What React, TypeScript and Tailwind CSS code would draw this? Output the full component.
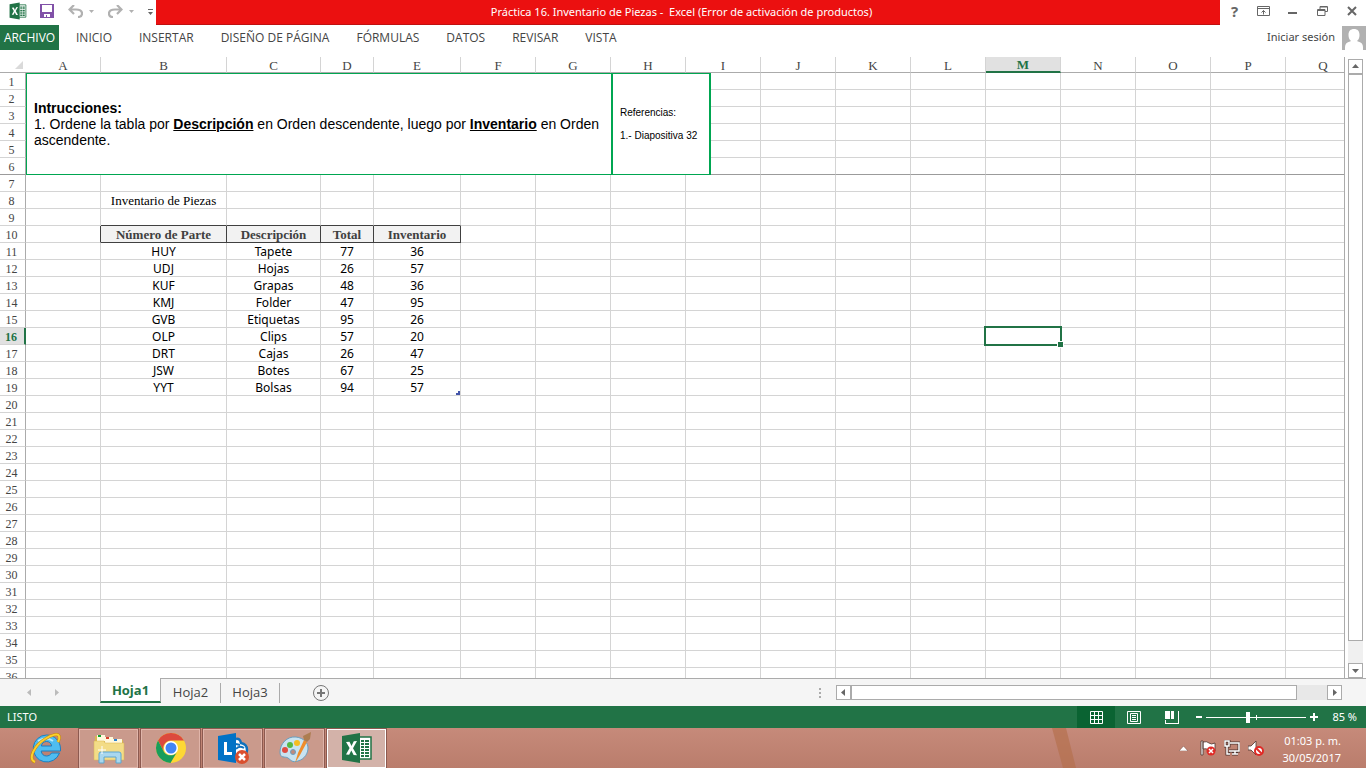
import { clsx } from "clsx";

const ribbonTabs = ["INICIO", "INSERTAR", "DISEÑO DE PÁGINA", "FÓRMULAS", "DATOS", "REVISAR", "VISTA"];

const columns = [
    { id: "A", width: "w-[75px]" },
    { id: "B", width: "w-[126px]" },
    { id: "C", width: "w-[94px]" },
    { id: "D", width: "w-[53px]" },
    { id: "E", width: "w-[87px]" },
    ..."FGHIJKLMNOPQ".split("").map((id) => ({ id, width: "w-[75px]" })),
];

const headings = ["Número de Parte", "Descripción", "Total", "Inventario"];

const parts = [
    ["HUY", "Tapete", "77", "36"],
    ["UDJ", "Hojas", "26", "57"],
    ["KUF", "Grapas", "48", "36"],
    ["KMJ", "Folder", "47", "95"],
    ["GVB", "Etiquetas", "95", "26"],
    ["OLP", "Clips", "57", "20"],
    ["DRT", "Cajas", "26", "47"],
    ["JSW", "Botes", "67", "25"],
    ["YYT", "Bolsas", "94", "57"],
];

const rows = Array.from({ length: 36 }, (_, i) => i + 1);

function cellValue(row: number, col: number) {
    if (row === 8 && col === 1) return "Inventario de Piezas";
    if (col < 1 || col > 4) return "";
    if (row === 10) return headings[col - 1];
    return parts[row - 11]?.[col - 1] ?? "";
}

function ExcelLogo({ className }: { className: string }) {
    return (
        <svg viewBox="0 0 32 32" className={className} aria-hidden="true">
            <path d="M16 5h14v22H16z" fill="#fff" stroke="#217346" strokeWidth="1.500" />
            <path d="M20 8h3v2h-3zM24 8h4v2h-4zM20 11h3v2h-3zM24 11h4v2h-4zM20 14h3v2h-3zM24 14h4v2h-4zM20 17h3v2h-3zM24 17h4v2h-4zM20 20h3v2h-3zM24 20h4v2h-4zM20 23h3v2h-3zM24 23h4v2h-4z" fill="#217346" />
            <path d="M1 4 19 1v30L1 28z" fill="#217346" />
            <path d="m5 10 3.500-.3 2 4.300 2.300-4.700 3.200-.3-4 7.200 4 7-3.400-.2-2.300-4.600-2.100 4.300-3.200-.2 3.600-6.400z" fill="#fff" />
        </svg>
    );
}

function TitleBar() {
    return (
        <header className="flex h-[25px] shrink-0">
            <div className="flex w-[156px] shrink-0 items-center pl-[9px] pb-[3px]">
                <ExcelLogo className="h-[18px] w-[18px]" />
                <button aria-label="Guardar" className="ml-[13px]">
                    <svg viewBox="0 0 14 14" className="h-[14px] w-[14px]">
                        <path d="M0 0h14v14H0z" fill="#8151a8" />
                        <path d="M2 1h10v7H2zM4 10h6v3H7v-2H6v2H4z" fill="#fff" />
                    </svg>
                </button>
                <button aria-label="Deshacer" className="ml-[14px] flex items-center gap-[6px] text-[#b1b1b1]">
                    <svg viewBox="0 0 15 13" className="h-[13px] w-[15px]" fill="none" stroke="currentColor" strokeWidth="2.200">
                        <path d="M6 0 1.500 4.500 6 9M2 4.500h6c4 0 6 1.500 6 4 0 2-1.500 3.500-4 3.500" />
                    </svg>
                    <svg viewBox="0 0 5 3" className="h-[3px] w-[5px]"><path d="M0 0h5L2.500 3z" fill="currentColor" /></svg>
                </button>
                <button aria-label="Rehacer" className="ml-[14px] flex items-center gap-[6px] text-[#b1b1b1]">
                    <svg viewBox="0 0 15 13" className="h-[13px] w-[15px]" fill="none" stroke="currentColor" strokeWidth="2.200">
                        <path d="m9 0 4.500 4.500L9 9M13 4.500H7c-4 0-6 1.500-6 4C1 10.500 2.500 12 5 12" />
                    </svg>
                    <svg viewBox="0 0 5 3" className="h-[3px] w-[5px]"><path d="M0 0h5L2.500 3z" fill="currentColor" /></svg>
                </button>
                <button aria-label="Personalizar barra" className="ml-[14px] pt-[2px]">
                    <svg viewBox="0 0 5 6" className="h-[6px] w-[5px]" fill="#666"><path d="M0 0h5v1H0zM0 3h5L2.500 6z" /></svg>
                </button>
            </div>
            <h1 className="flex flex-1 items-center justify-center border-b border-[#c01010] bg-[#eb1010] pr-[13px] text-[11px] whitespace-pre text-white">
                {"Práctica 16. Inventario de Piezas -  Excel (Error de activación de productos)"}
            </h1>
            <div className="flex w-[146px] shrink-0 items-center pb-[3px] pl-[11px] text-[#666]">
                <button aria-label="Ayuda" className="w-[7px] text-[15px] font-bold leading-4">?</button>
                <button aria-label="Opciones de presentación" className="ml-[19px]">
                    <svg viewBox="0 0 13 10" className="h-[10px] w-[13px]" fill="none" stroke="currentColor"><path d="M.5.5h12v9H.5zM1 2.500h11M6.500 8.500v-4M4.500 6.500l2-2 2 2" /></svg>
                </button>
                <button aria-label="Minimizar" className="ml-[18px] mt-[4px] h-[2px] w-[9px] bg-[#666]" />
                <button aria-label="Restaurar" className="ml-[20px]">
                    <svg viewBox="0 0 11 10" className="h-[10px] w-[11px]" fill="none" stroke="currentColor"><path d="M3 3V.5h7.500v5H8M3 1h7M.5 3.500H8v6H.5zM1 4.500h7" /></svg>
                </button>
                <button aria-label="Cerrar" className="ml-[19px]">
                    <svg viewBox="0 0 10 10" className="h-[10px] w-[10px]" stroke="currentColor" strokeWidth="2"><path d="m1 1 8 8M9 1 1 9" /></svg>
                </button>
            </div>
        </header>
    );
}

function Ribbon() {
    return (
        <nav className="mb-[7px] flex h-[25px] shrink-0 items-center whitespace-nowrap text-[12px] text-[#444]">
            <button className="h-full w-[59px] bg-[#217346] font-['Open_Sans',sans-serif] text-white">ARCHIVO</button>
            <div className="ml-[17px] flex gap-[27px] font-['Open_Sans',sans-serif]">
                {ribbonTabs.map((tab) => (
                    <button key={tab}>{tab}</button>
                ))}
            </div>
            <button className="ml-auto text-[11px]">Iniciar sesión</button>
            <svg viewBox="0 0 24 24" className="ml-[7px] h-6 w-6" aria-hidden="true">
                <path d="M0 0h24v24H0z" fill="#b1b1b1" />
                <path d="M3 24v-3c0-3 2-5 5-5.500l1-.5c-2-1.500-2.500-4-2.500-6C6.500 5 8.500 3 12 3s5.500 2 5.500 6c0 2-.5 4.500-2.500 6l1 .5c3 .5 5 2.500 5 5.500v3z" fill="#fff" />
            </svg>
        </nav>
    );
}

function Sheet() {
    return (
        <div className="relative min-w-0 flex-1 overflow-hidden border-r border-[#ababab]">
            <table className="w-[1361px] table-fixed border-separate border-spacing-0 whitespace-nowrap text-center">
                <thead>
                    <tr className="h-4 font-['Liberation_Serif',serif] text-[13px] leading-[15px] text-[#444]">
                        <th className="w-[26px] border-b border-[#ababab] p-0">
                            <svg viewBox="0 0 8 8" className="ml-[15px] h-2 w-2"><path d="M8 0v8H0z" fill="#dadada" /></svg>
                        </th>
                        {columns.map((col) => (
                            <th
                                key={col.id}
                                className={clsx(
                                    "border-r p-0",
                                    col.width,
                                    col.id === "M"
                                        ? "border-b-2 border-r-[#d4d4d4] border-b-[#217346] bg-[#e1e1e1] font-bold text-[#217346]"
                                        : "border-b border-r-[#d4d4d4] border-b-[#ababab] font-normal"
                                )}
                            >
                                <div className="h-[14px]">{col.id}</div>
                            </th>
                        ))}
                    </tr>
                </thead>
                <tbody>
                    {rows.map((row) => (
                        <tr key={row} className="h-[17px] text-[12px] leading-[18px] text-black">
                            <th
                                className={clsx(
                                    "border-b p-0 pr-[2px] font-['Liberation_Serif',serif] text-[12px]",
                                    row === 16
                                        ? "border-r-2 border-r-[#217346] bg-[#e1e1e1] font-bold text-[#217346]"
                                        : "border-r border-r-[#ababab] font-normal text-[#444]",
                                    row === 6 ? "border-b-[#9b9b9b]" : "border-b-[#d4d4d4]"
                                )}
                            >
                                <div className="h-4">{row}</div>
                            </th>
                            {columns.map((col, i) => {
                                const heading = row === 10 && i > 0 && i < 5;
                                return (
                                    <td
                                        key={col.id}
                                        className={clsx(
                                            "border-r border-b p-0",
                                            heading && "border-[#404040] bg-[#f2f2f2] font-['Liberation_Serif',serif] text-[13px] font-bold text-[#404040]",
                                            !heading && (row === 9 && i > 0 && i < 5 ? "border-b-[#404040]" : row === 6 ? "border-b-[#9b9b9b]" : "border-b-[#d4d4d4]"),
                                            !heading && (row === 10 && i === 0 ? "border-r-[#404040]" : "border-r-[#d4d4d4]"),
                                            row === 8 && "font-['Liberation_Serif',serif] text-[13px]"
                                        )}
                                    >
                                        <div className="relative h-4">
                                            {cellValue(row, i)}
                                            {row === 16 && col.id === "M" && (
                                                <span className="absolute -top-[2px] -left-[2px] h-5 w-[78px] border-2 border-[#217346]">
                                                    <span className="absolute -right-[4px] -bottom-[4px] h-[7px] w-[7px] border border-white bg-[#217346]" />
                                                </span>
                                            )}
                                            {row === 19 && i === 4 && (
                                                <svg viewBox="0 0 4 4" className="absolute right-0 bottom-0 h-1 w-1"><path d="M2 0h2v4H0V2h2z" fill="#4455aa" /></svg>
                                            )}
                                        </div>
                                    </td>
                                );
                            })}
                        </tr>
                    ))}
                </tbody>
            </table>

            {/* text boxes floating over the frozen rows */}
            <div className="absolute top-4 left-[26px] flex h-[102px] w-[685px] border border-r-2 border-[#00a651] bg-white font-['Liberation_Sans',sans-serif] text-black">
                <div className="flex flex-1 flex-col justify-center pl-[7px] text-[14px] leading-[16px]">
                    <strong>Intrucciones:</strong>
                    <p>
                        1. Ordene la tabla por <b className="underline">Descripción</b> en Orden descendente, luego por{" "}
                        <b className="underline">Inventario</b> en Orden
                        <br />
                        ascendente.
                    </p>
                </div>
                <div className="flex w-[98px] flex-col justify-center gap-[11px] border-l-2 border-[#00a651] pl-[7px] text-[10px] leading-[12px]">
                    <p>Referencias:</p>
                    <p>1.- Diapositiva 32</p>
                </div>
            </div>
        </div>
    );
}

function ScrollArrow({ label, d }: { label: string; d: string }) {
    return (
        <button aria-label={label} className="flex h-[15px] w-[15px] shrink-0 items-center justify-center border border-[#ababab] bg-white">
            <svg viewBox="0 0 7 7" className="h-[7px] w-[7px]" fill="#666"><path d={d} /></svg>
        </button>
    );
}

function SheetTabs() {
    return (
        <div className="flex h-7 shrink-0 bg-[#f5f5f5] font-['Open_Sans',sans-serif] text-[13px] text-[#444]">
            <div className="flex w-[100px] items-center gap-[24px] border-t border-[#ababab] pl-[27px]">
                <button aria-label="Hoja anterior"><svg viewBox="0 0 4 7" className="h-[7px] w-1" fill="#bbb"><path d="M4 0v7L0 3.500z" /></svg></button>
                <button aria-label="Hoja siguiente"><svg viewBox="0 0 4 7" className="h-[7px] w-1" fill="#bbb"><path d="M0 0v7l4-3.500z" /></svg></button>
            </div>
            <button className="h-[25px] w-[61px] border-r border-b-2 border-l border-r-[#ababab] border-b-[#217346] border-l-[#ababab] bg-white pt-[2px] font-bold text-[#217346]">Hoja1</button>
            <div className="flex flex-1 items-center border-t border-[#ababab]">
                <button className="h-5 w-[60px] border-r border-[#ababab]">Hoja2</button>
                <button className="h-5 w-[59px] border-r border-[#ababab]">Hoja3</button>
                <button aria-label="Hoja nueva" className="ml-[33px]">
                    <svg viewBox="0 0 16 16" className="h-4 w-4" fill="none" stroke="#777"><circle cx="8" cy="8" r="7.500" /><path d="M8 4v8M4 8h8" strokeWidth="2" /></svg>
                </button>
                <svg viewBox="0 0 2 10" className="ml-auto h-[10px] w-[2px]" fill="#ababab"><path d="M0 0h2v2H0zM0 4h2v2H0zM0 8h2v2H0z" /></svg>
                <div className="ml-[15px] flex w-[506px] bg-[#e8e8e8]">
                    <ScrollArrow label="Desplazar a la izquierda" d="M5 0v7L1 3.500z" />
                    <div className="h-[15px] w-[446px] border border-[#ababab] bg-white" />
                    <div className="flex-1" />
                    <ScrollArrow label="Desplazar a la derecha" d="M2 0v7l4-3.500z" />
                </div>
                <div className="w-6" />
            </div>
        </div>
    );
}

function StatusBar() {
    return (
        <footer className="flex h-[22px] shrink-0 items-center bg-[#217346] pl-[7px] text-[11px] text-white">
            <span>LISTO</span>
            <button aria-label="Normal" className="ml-auto flex h-full w-[38px] items-center justify-center bg-[#0a6332]">
                <svg viewBox="0 0 13 13" className="h-[13px] w-[13px]" fill="none" stroke="#fff"><path d="M.5.5h12v12H.5zM4.500 0v13M8.500 0v13M0 4.500h13M0 8.500h13" /></svg>
            </button>
            <button aria-label="Diseño de página" className="flex w-[38px] justify-center">
                <svg viewBox="0 0 14 13" className="h-[13px] w-[14px]" fill="none" stroke="#fff"><path d="M.5.5h13v12H.5zM3.500 2.500h7v8h-7zM5 4.500h4M5 6.500h4M5 8.500h4" /></svg>
            </button>
            <button aria-label="Vista previa de salto de página" className="flex w-[38px] justify-center">
                <svg viewBox="0 0 14 13" className="h-[13px] w-[14px]"><path d="M0 0h5v8H0zM6 0h3v8H6zM13 0h1v13H0V9h1v3h12z" fill="#fff" /></svg>
            </button>
            <button aria-label="Alejar" className="ml-[5px] h-[2px] w-[6px] bg-white" />
            <svg viewBox="0 0 100 11" className="ml-1 h-[11px] w-[100px]" fill="#fff"><path d="M0 5h100v1H0zM40 0h4v11h-4zM50 3h1v5h-1z" /></svg>
            <button aria-label="Acercar" className="ml-1"><svg viewBox="0 0 8 8" className="h-2 w-2"><path d="M3 0h2v3h3v2H5v3H3V5H0V3h3z" fill="#fff" /></svg></button>
            <span className="w-12 pr-[9px] text-right">85 %</span>
        </footer>
    );
}

function ExplorerIcon() {
    return (
        <svg viewBox="0 0 32 32" className="h-8 w-8" fill="none">
            <path d="M16.500 3A13.500 13.500 0 1 0 29.500 21h-8c-1 2-3 3-5 3-3 0-5-2-5.300-5H30.500v-2C30.500 9 24.500 3 16.500 3zm-5.200 11c.6-3 2.600-4.500 5.200-4.500s4.600 1.500 5.200 4.500z" fill="#4fbdf0" stroke="#1b7fc0" />
            <path d="M8 9q8-5 15 0" stroke="#b5e9fc" strokeWidth="2" />
            <path d="M5 30C-3 27 5 13 15 7c6-4 13-6 14-3 1 2 0 4-1 6" stroke="#c98a08" strokeWidth="3" />
            <path d="M5 30C-3 27 5 13 15 7c6-4 13-6 14-3 1 2 0 4-1 6" stroke="#fbd02d" strokeWidth="2" />
        </svg>
    );
}

function FolderIcon() {
    return (
        <svg viewBox="0 0 32 32" className="h-8 w-8">
            <path d="M2 4h9l1 2h8l1 2h9v18H2z" fill="#d9b552" />
            <path d="M4 3h8v6H4zM12 5h8v6h-8zM20 7h9v6h-9z" fill="#fff8dc" />
            <path d="M5 3h3v2H5z" fill="#12a330" />
            <path d="M13 5h3v2h-3z" fill="#d9402a" />
            <path d="M21 7h3v2h-3z" fill="#2b83d0" />
            <path d="M1 9h10l1 2h19v17H1z" fill="#f3dc87" stroke="#d9b552" strokeWidth=".5" />
            <path d="M6 31v-9q0-2 2-2h18q2 0 2 2v9h-5v-6H11v6z" fill="#a9d7ee" stroke="#5da6cf" />
            <path d="M9 14v8M5 18h8" stroke="#fff" />
        </svg>
    );
}

function ChromeIcon() {
    return (
        <svg viewBox="0 0 32 32" className="h-8 w-8">
            <circle cx="16" cy="16" r="15" fill="#fdd835" />
            <path d="M3 8.500A15 15 0 0 1 29 8.500H16A8 8 0 0 0 9 20z" fill="#dc4a3e" />
            <path d="M3 8.500A15 15 0 0 0 15.500 31L22 20a8 8 0 0 1-13 0z" fill="#199d5b" />
            <circle cx="16" cy="16" r="7" fill="#fff" />
            <circle cx="16" cy="16" r="5.500" fill="#4285f4" />
        </svg>
    );
}

function LyncIcon() {
    return (
        <svg viewBox="0 0 32 32" className="h-8 w-8">
            <path d="M19 7q4-1 5 4 6 1 6 7t-7 7h-4" fill="#fff" stroke="#0f71bd" strokeWidth="2.500" />
            <path d="M19 17q3-4 8-1M19 12l4 1" fill="none" stroke="#0f71bd" strokeWidth="2" />
            <path d="M1 4 19 1v30L1 28z" fill="#0072c6" />
            <path d="M7 10h3v10h5v3H7z" fill="#fff" />
            <circle cx="25" cy="25" r="7" fill="#da4f2e" />
            <path d="m22 22 6 6M28 22l-6 6" stroke="#fff" strokeWidth="2.500" />
        </svg>
    );
}

function PaintIcon() {
    return (
        <svg viewBox="0 0 32 32" className="h-8 w-8">
            <path d="M17 5C8 4 1 12 1 20c0 7 5 4 8 6s4 5 10 3c7-2 10-8 10-13S25 6 17 5z" fill="#c8e3f1" stroke="#699fc0" />
            <circle cx="6" cy="18" r="3" fill="#df4d41" />
            <circle cx="11" cy="13" r="3" fill="#55b744" />
            <circle cx="18" cy="11" r="3" fill="#f5bd22" />
            <circle cx="14" cy="20" r="2.500" fill="#c08a7b" stroke="#699fc0" />
            <path d="m16 31 3-10 6-13 3 2-7 13z" fill="#ef8d2b" />
            <path d="m25 8-1-4 8-4-1 7-3 3z" fill="#ad7d51" />
        </svg>
    );
}

function TaskButton({ label, active, children }: { label: string; active?: boolean; children: React.ReactNode }) {
    return (
        <button
            aria-label={label}
            className={clsx(
                "flex h-[39px] w-[59px] items-center justify-center border outline outline-[#8c5a50]",
                active ? "border-white bg-[#d3b2a9]" : "border-[#e0b5aa] bg-[#ca9a8c]"
            )}
        >
            {children}
        </button>
    );
}

function Taskbar() {
    return (
        <div className="flex h-10 shrink-0 items-center bg-linear-to-b from-[#c68a7a] to-[#ba7d6c] text-white">
            <button aria-label="Internet Explorer" className="mr-[17px] ml-[30px]"><ExplorerIcon /></button>
            <div className="flex gap-[3px]">
                <TaskButton label="Explorador de archivos"><FolderIcon /></TaskButton>
                <TaskButton label="Chrome"><ChromeIcon /></TaskButton>
                <TaskButton label="Lync"><LyncIcon /></TaskButton>
                <TaskButton label="Paint"><PaintIcon /></TaskButton>
                <TaskButton label="Excel" active><ExcelLogo className="h-8 w-8" /></TaskButton>
            </div>
            <svg viewBox="0 0 40 40" className="ml-auto h-10 w-10" aria-hidden="true"><path d="M2 0h14l10 40H13z" fill="#b5714f" opacity=".7" /></svg>
            <div className="ml-[89px] flex items-center gap-2">
                <button aria-label="Mostrar iconos ocultos"><svg viewBox="0 0 9 5" className="mr-1 h-[5px] w-[9px]"><path d="M4.500 0 9 5H0z" fill="#fff" stroke="#74493f" strokeWidth=".5" /></svg></button>
                <svg viewBox="0 0 16 16" className="h-4 w-4">
                    <path d="M1 1h2v14H1zM3 2q4-1 6 1t6 0v8q-3 1-6-1t-6-1z" fill="#fff" stroke="#4c3530" strokeWidth=".8" />
                    <circle cx="11" cy="11" r="4.500" fill="#e02a26" /><path d="m9 9 4 4M13 9l-4 4" stroke="#fff" strokeWidth="1.500" />
                </svg>
                <svg viewBox="0 0 16 16" className="h-4 w-4" fill="none">
                    <path d="M6 3h9v8H5M8 14h6M11 11v3M1 1h4v5H1zM3 6v8h3" stroke="#4c3530" strokeWidth="3" />
                    <path d="M6 3h9v8H5M8 14h6M11 11v3M1 1h4v5H1zM3 6v8h3" stroke="#fff" strokeWidth="1.500" />
                </svg>
                <svg viewBox="0 0 16 16" className="h-4 w-4">
                    <path d="M0 6h3l5-5v14l-5-5H0z" fill="#fff" stroke="#4c3530" strokeWidth=".8" />
                    <circle cx="11" cy="11" r="4" fill="#fff" stroke="#e02a26" strokeWidth="2" /><path d="m8 8 6 6" stroke="#e02a26" strokeWidth="2" />
                </svg>
            </div>
            <div className="w-[102px] pt-[2px] pr-[25px] text-right text-[11px] leading-[17px] whitespace-nowrap">
                <div>01:03 p. m.</div>
                <div>30/05/2017</div>
            </div>
        </div>
    );
}

export default function App() {
    return (
        <div className="flex h-screen flex-col overflow-hidden bg-white font-['Noto_Sans',sans-serif]">
            <TitleBar />
            <Ribbon />
            <main className="flex min-h-0 flex-1">
                <Sheet />
                <div className="flex w-[21px] shrink-0 flex-col items-center pt-[2px]">
                    <ScrollArrow label="Desplazar hacia arriba" d="M0 5h7L3.500 1z" />
                    <div className="flex w-[15px] flex-1 flex-col bg-[#f0f0f0] pb-[22px]">
                        <div className="flex-1 border border-[#ababab] bg-white" />
                    </div>
                    <ScrollArrow label="Desplazar hacia abajo" d="M0 2h7L3.500 6z" />
                </div>
            </main>
            <SheetTabs />
            <StatusBar />
            <Taskbar />
        </div>
    );
}
